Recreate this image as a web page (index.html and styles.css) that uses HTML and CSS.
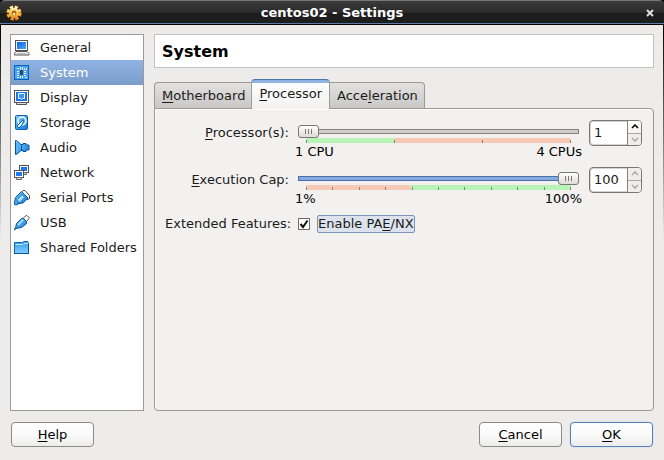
FILE: index.html
```html
<!DOCTYPE html>
<html lang="en">
<head>
<meta charset="utf-8">
<meta name="viewport" content="width=device-width, initial-scale=1">
<title>centos02 - Settings</title>
<link rel="stylesheet" href="styles.css">
</head>
<body>
<div class="window">
  <header class="titlebar">
    <svg class="icon" viewBox="0 0 16 16" aria-hidden="true">
      <defs><linearGradient id="gold" x1="0" y1="0" x2="0" y2="1"><stop offset="0" stop-color="#fff0b8"/><stop offset=".5" stop-color="#fcc653"/><stop offset="1" stop-color="#e08a1c"/></linearGradient></defs>
      <circle cx="8" cy="8" r="6" fill="none" stroke="#a4560a" stroke-width="3.600" stroke-dasharray="3.200 1.512"/>
      <circle cx="8" cy="8" r="5.800" fill="none" stroke="url(#gold)" stroke-width="3" stroke-dasharray="2.900 1.655"/>
      <circle cx="8" cy="8" r="5.200" fill="url(#gold)"/>
      <circle cx="8" cy="8" r="2.400" fill="#b0600c"/><circle cx="8" cy="9" r="1.300" fill="#fff0b0"/>
    </svg>
    <h1 class="title">centos02 - Settings</h1>
    <button class="close" type="button" aria-label="Close"><svg viewBox="0 0 8 8" aria-hidden="true"><path d="M1 1l6 6M7 1l-6 6"/></svg></button>
  </header>

  <div class="content">
    <nav class="sidebar" aria-label="Categories">
      <a href="#general"><svg class="icon" viewBox="0 0 16 16" aria-hidden="true">
        <rect x="1.500" y=".5" width="12" height="10" fill="#fff" stroke="#555"/><rect x="3" y="2" width="9" height="7" fill="url(#screen)"/>
        <path d="M2 11.500h11l2 2v1.500H.5v-1.500z" fill="#eee" stroke="#555"/><path d="M3 13.500h9" stroke="#bbb"/></svg>General</a>
      <a class="selected" href="#system" aria-current="page"><svg class="icon" viewBox="0 0 16 16" aria-hidden="true">
        <rect x=".5" y=".5" width="14" height="14" fill="#4aa3ee" stroke="#0a5fb8"/>
        <path d="M3 3.500h2M6.500 2v3M8.500 2v3M10.500 3v2M3 6.500h2M3 8.500h2M3 10.500h2M3 12.500h2M10 6.500h2M10 8.500h2M10 10.500h2M6.500 11v2M8.500 11v2M11 12.500h2M12.500 3v2" stroke="#d8f2ff" fill="none"/>
        <rect x="6" y="5" width="3" height="5" fill="#33485a"/></svg>System</a>
      <a href="#display"><svg class="icon" viewBox="0 0 16 16" aria-hidden="true">
        <rect x=".5" y=".5" width="14" height="12" fill="#fff" stroke="#555"/><rect x="2" y="2" width="11" height="9" fill="#1675ee"/>
        <path d="M4.500 3.500h6v5h-2l-1 1-1-1h-2z" fill="#3697f5" stroke="#fff"/><path d="M2.500 12.500h10v2h-10z" fill="#ddd" stroke="#555"/></svg>Display</a>
      <a href="#storage"><svg class="icon" viewBox="0 0 16 16" aria-hidden="true">
        <rect x="1.500" y=".5" width="12" height="14" rx="1" fill="url(#blue)" stroke="#075eb0"/>
        <circle cx="8" cy="6" r="4" fill="#5cb2f2" stroke="#fff" stroke-width="1.500"/><path d="M9 5L5 9l-2 2 2 2 3-3 2-5z" fill="#d8f1ff" stroke="#1765a8"/></svg>Storage</a>
      <a href="#audio"><svg class="icon" viewBox="0 0 16 16" aria-hidden="true">
        <path d="M1.500.5h1L7 4.500h2v-1h3v1.500h3v5h-3v1.500H9v-1H7l-4.500 4h-1z" fill="url(#blue)" stroke="#07549c"/><path d="M7.500 5v5" stroke="#075eb0"/><path d="M3 3v9" stroke="#5bb6f5" stroke-width="2"/></svg>Audio</a>
      <a href="#network"><svg class="icon" viewBox="0 0 16 16" aria-hidden="true">
        <rect x="5.500" y=".5" width="9" height="7" fill="#fff" stroke="#555"/><rect x="7" y="2" width="6" height="4" fill="#1b78f0"/><path d="M8.500 7.500h4v2h-4z" fill="#ddd" stroke="#666"/>
        <rect x=".5" y="5.500" width="9" height="7" fill="#fff" stroke="#555"/><rect x="2" y="7" width="6" height="4" fill="#1b78f0"/><path d="M2.500 12.500h5v2h-5z" fill="#ddd" stroke="#666"/></svg>Network</a>
      <a href="#serial"><svg class="icon" viewBox="0 0 16 16" aria-hidden="true">
        <path d="M7 2.500L9 .5h2l4.500 5v3L13 10z" fill="#fff" stroke="#444"/>
        <path d="M.5 14.500v-2l1-5L7.500 1.500l6.500 6.500-5 5-4 .5-3 1.500z" fill="url(#blue)" stroke="#07549c"/><path d="M3 9.500l5-5 3 3-5 5H4z" fill="#8ed6ff" stroke="#1470bd"/><path d="M5 10l4-4" stroke="#d8f4ff"/></svg>Serial Ports</a>
      <a href="#usb"><svg class="icon" viewBox="0 0 16 16" aria-hidden="true">
        <path d="M9 3.500l3-3h1l2 2v1l-3 3.500z" fill="#fff" stroke="#555"/>
        <path d="M1.500 13.500l1-5 5-5h2l3 3v2l-5 4z" fill="url(#blue)" stroke="#07549c"/><path d="M4 10l5-5" stroke="#b9e7ff" stroke-width="1.500"/><path d="M0 15l2-2" stroke="#07549c" stroke-width="1.500"/></svg>USB</a>
      <a href="#shared"><svg class="icon" viewBox="0 0 16 16" aria-hidden="true">
        <path d="M.5 13.500v-11h8l1-1h4l1 2v10z" fill="url(#folder)" stroke="#0868ba"/><path d="M1.500 4.500H9l1-1h4" fill="none" stroke="#b8e8ff"/><path d="M0 13.500h15M14.500 3v11" stroke="#07549c"/></svg>Shared Folders</a>
    </nav>

    <main class="page">
      <h2 class="heading">System</h2>
      <div class="tabs" role="tablist">
        <button class="tab" type="button" role="tab" aria-selected="false"><u>M</u>otherboard</button>
        <button class="tab active" type="button" role="tab" aria-selected="true"><u>P</u>rocessor</button>
        <button class="tab" type="button" role="tab" aria-selected="false">Acce<u>l</u>eration</button>
      </div>
      <form class="panel" role="tabpanel">
        <label class="label" for="cpus"><u>P</u>rocessor(s):</label>
        <div class="slider">
          <input id="cpus" class="range" type="range" min="1" max="4" value="1">
          <div class="scale cpu-scale"><i></i><i></i><i></i><i></i></div>
          <div class="limits"><span>1 CPU</span><span>4 CPUs</span></div>
        </div>
        <div class="spin">
          <input type="text" inputmode="numeric" value="1" aria-label="Processors">
          <div class="steps">
            <button type="button" aria-label="More processors"><svg viewBox="0 0 8 5" aria-hidden="true"><path d="M1 4l3-3 3 3"/></svg></button>
            <button type="button" aria-label="Fewer processors" disabled><svg viewBox="0 0 8 5" aria-hidden="true"><path d="M1 1l3 3 3-3"/></svg></button>
          </div>
        </div>

        <label class="label" for="cap"><u>E</u>xecution Cap:</label>
        <div class="slider">
          <input id="cap" class="range filled" type="range" min="1" max="100" value="100">
          <div class="scale cap-scale"><i></i><i></i><i></i><i></i><i></i><i></i><i></i><i></i><i></i><i></i><i></i></div>
          <div class="limits"><span>1%</span><span>100%</span></div>
        </div>
        <div class="spin">
          <input type="text" inputmode="numeric" value="100" aria-label="Execution cap percent">
          <div class="steps">
            <button type="button" aria-label="Raise cap" disabled><svg viewBox="0 0 8 5" aria-hidden="true"><path d="M1 4l3-3 3 3"/></svg></button>
            <button type="button" aria-label="Lower cap" disabled><svg viewBox="0 0 8 5" aria-hidden="true"><path d="M1 1l3 3 3-3"/></svg></button>
          </div>
        </div>

        <span class="label feature-label">Extended Features:</span>
        <div class="feature">
          <input id="pae" type="checkbox" checked>
          <label for="pae">Enable PA<u>E</u>/NX</label>
        </div>
      </form>
    </main>
  </div>

  <footer class="actions">
    <button class="button help" type="button"><u>H</u>elp</button>
    <button class="button" type="button"><u>C</u>ancel</button>
    <button class="button default" type="button"><u>O</u>K</button>
  </footer>
</div>
<svg class="defs" width="0" height="0" aria-hidden="true">
  <defs>
    <linearGradient id="screen" x1="0" y1="0" x2="1" y2="1"><stop offset="0" stop-color="#0862e8"/><stop offset="1" stop-color="#45a8fc"/></linearGradient>
    <linearGradient id="blue" x1="0" y1="0" x2="1" y2="1"><stop offset="0" stop-color="#7ccdfc"/><stop offset="1" stop-color="#1278dc"/></linearGradient>
    <linearGradient id="folder" x1="0" y1="0" x2="0" y2="1"><stop offset="0" stop-color="#3a9cec"/><stop offset="1" stop-color="#7fd0ff"/></linearGradient>
  </defs>
</svg>
</body>
</html>
```
FILE: styles.css
```css
* { box-sizing: border-box; }

body {
  margin: 0;
  background: #000;
  color: #1a1a1a;
  font: 13px/16px "DejaVu Sans", sans-serif;
}

button, input { font: inherit; color: inherit; margin: 0; }
u { text-decoration: underline; text-decoration-thickness: 1px; text-underline-offset: 2px; }
.defs { position: absolute; }
.icon { width: 16px; height: 16px; flex: none; }

.window {
  display: flex;
  flex-direction: column;
  min-height: 100vh;
  background: linear-gradient(#000 25px, #777 140px, #edeceb 240px);
  padding: 0 1px;
  border-radius: 5px 5px 0 0;
}

.titlebar {
  display: flex;
  align-items: center;
  height: 25px;
  margin: 0 -1px;
  padding: 0 10px 0 6px;
  border-top: 1px solid #777;
  border-bottom: 1px solid #000;
  border-radius: 5px 5px 0 0;
  background: linear-gradient(#3a3a3a, #2b2b2b 50%, #1c1c1c 51%, #1e1e1e);
  box-shadow: inset 0 -1px #5d7aa3;
  color: #fff;
}
.title { flex: 1; margin: 0 4px 0 0; font-size: 13px; line-height: 16px; text-align: center; }
.close { display: flex; padding: 0; border: 0; background: none; }
.close svg { width: 8px; height: 8px; stroke: #ddd; stroke-width: 2; }

.content {
  flex: 1;
  display: flex;
  gap: 10px;
  padding: 9px 9px 11px;
  background: #edeceb;
}

.sidebar {
  width: 134px;
  flex: none;
  border: 1px solid #9c9a98;
  background: #fff;
}
.sidebar a {
  display: flex;
  align-items: center;
  gap: 10px;
  height: 25px;
  padding: 0 3px;
  color: #1a1a1a;
  text-decoration: none;
  white-space: nowrap;
}
.sidebar .selected { background: linear-gradient(#8fb3e4, #7c9dcb); color: #fff; }

.page { flex: 1; display: flex; flex-direction: column; min-width: 0; }
.heading {
  margin: 0 0 11px;
  padding: 8px 7px 6px;
  border: 1px solid #c3c1bf;
  background: #fff;
  color: #000;
  font-size: 16px;
  line-height: 18px;
}

.tabs { display: flex; align-items: flex-end; }
.tab {
  height: 26px;
  padding: 0 6px 0 7px;
  border: 1px solid #9c9a98;
  border-left-width: 0;
  border-bottom: 0;
  border-radius: 0 4px 0 0;
  background: linear-gradient(#e2e1e0, #c9c8c6);
  white-space: nowrap;
}
.tab:first-child { border-left-width: 1px; border-radius: 4px 0 0 0; border-right-width: 0; }
.tab.active {
  position: relative;
  height: 30px;
  margin-bottom: -1px;
  padding: 0 7px 2px;
  border-left-width: 1px;
  border-top-color: #4d74ad;
  border-radius: 4px 4px 0 0;
  background: linear-gradient(#8fb3e4 3px, #fdfdfd 3px, #f2f1f0);
}

.panel {
  flex: 1;
  display: grid;
  grid-template-columns: 124px 1fr 53px;
  grid-template-rows: 47px 47px auto;
  align-content: start;
  column-gap: 9px;
  padding: 11px 11px 11px 10px;
  border: 1px solid #9c9a98;
  border-radius: 0 4px 4px 4px;
  background: #f2f1f0;
  box-shadow: inset 1px 1px #fff;
}
.label { padding-top: 5px; text-align: right; white-space: nowrap; }

.slider { padding: 4px 1px 0 0; min-width: 0; }
.range {
  display: block;
  width: 100%;
  height: 14px;
  appearance: none;
  background: none;
}
.range::-webkit-slider-runnable-track {
  height: 5px;
  background: #cfcecc;
  box-shadow: inset 0 0 0 1px #84817e;
}
.range.filled::-webkit-slider-runnable-track { background: #86abe0; box-shadow: inset 0 0 0 1px #4b6fa8; }
.range::-webkit-slider-thumb {
  appearance: none;
  width: 21px;
  height: 13px;
  margin-top: -4px;
  border: 1px solid #777;
  border-radius: 3px;
  background:
    linear-gradient(90deg, #777 1px, transparent 1px 3px, #777 3px 4px, transparent 4px 6px, #777 6px) center / 7px 5px no-repeat,
    linear-gradient(#fff, #dddcda);
}
.scale {
  display: flex;
  align-items: flex-end;
  justify-content: space-between;
  height: 5px;
  margin: 0 8px;
}
.scale i { width: 1px; height: 3px; background: #85817c; }
.cpu-scale { background: linear-gradient(90deg, #b8f4b6 33.3%, #f5c9b6 33.3%); }
.cap-scale { background: linear-gradient(90deg, #f5c9b6 39.5%, #b8f4b6 39.5%); }
.limits { display: flex; justify-content: space-between; margin: 1px -3px 0; color: #000; }

.spin {
  display: flex;
  height: 26px;
  overflow: hidden;
  border: 1px solid #7a7774;
  border-radius: 4px;
  background: #fff;
  box-shadow: inset 0 0 0 1px #d5d3d1;
}
.spin input { flex: 1; width: 0; padding: 0 4px; border: 0; outline: 0; background: none; }
.steps { display: flex; flex-direction: column; width: 14px; border-left: 1px solid #84817e; }
.steps button {
  flex: 1;
  display: grid;
  place-items: center;
  padding: 0;
  border: 0;
  background: linear-gradient(#fff, #f4f3f2);
  color: #000;
}
.steps button + button { border-top: 1px solid #aaa; }
.steps button:disabled { background: #efeeed; color: #aaa; }
.steps svg { width: 8px; height: 5px; fill: none; stroke: currentColor; stroke-width: 1.5; }

.feature-label { padding-top: 2px; }
.feature { display: flex; align-items: center; gap: 7px; grid-column: 2 / 4; height: 20px; }
.feature input {
  width: 12px;
  height: 12px;
  appearance: none;
  border: 1px solid #6f6c69;
  background: #fff;
}
.feature input:checked {
  background: #fff url("data:image/svg+xml,%3Csvg xmlns='http://www.w3.org/2000/svg' viewBox='0 0 10 10'%3E%3Cpath d='M1.500 5l2.500 3L8.500 1.500' fill='none' stroke='%23111' stroke-width='2'/%3E%3C/svg%3E");
}
.feature label {
  border: 1px solid #7b94b8;
  border-radius: 2px;
  background: #dce3ed;
  white-space: nowrap;
}

.actions {
  display: flex;
  gap: 8px;
  padding: 0 10px 13px;
  background: #edeceb;
}
.button {
  width: 83px;
  height: 25px;
  padding: 0;
  border: 1px solid #8d8986;
  border-radius: 4px;
  background: linear-gradient(#fff, #fbfbfb 50%, #ececeb);
  color: #000;
}
.help { margin-right: auto; }
.default { border-color: #5580bb; box-shadow: 0 0 1px #86abe0; }
```
